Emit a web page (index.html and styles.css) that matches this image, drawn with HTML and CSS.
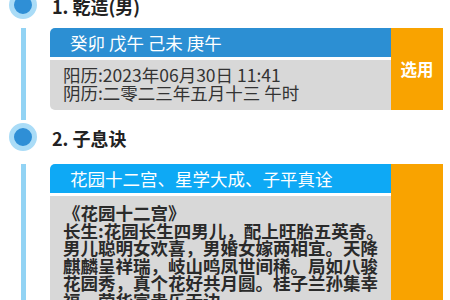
FILE: index.html
```html
<!DOCTYPE html>
<html lang="zh-CN">
<head>
<meta charset="utf-8">
<title>八字</title>
<link rel="stylesheet" href="styles.css">
</head>
<body>
<div class="timeline">
  <section class="item">
    <div class="dot"></div>
    <h2 class="title">1. 乾造(男)</h2>
    <div class="rail"></div>
    <div class="card">
      <div class="card-main">
        <div class="band band--dark">癸卯 戊午 己未 庚午</div>
        <div class="body">阳历:2023年06月30日 11:41<br>阴历:二零二三年五月十三 午时</div>
      </div>
      <button class="pick">选用</button>
    </div>
  </section>
  <section class="item item--second">
    <div class="dot"></div>
    <h2 class="title">2. 子息诀</h2>
    <div class="rail"></div>
    <div class="card">
      <div class="card-main">
        <div class="band band--bright">花园十二宫、星学大成、子平真诠</div>
        <div class="body body--verse">《花园十二宫》<br>长生:花园长生四男儿，配上旺胎五英奇。男儿聪明女欢喜，男婚女嫁两相宜。天降麒麟呈祥瑞，岐山鸣凤世间稀。局如八骏花园秀，真个花好共月圆。桂子兰孙集幸福，荣华富贵乐无边。</div>
      </div>
      <button class="pick"></button>
    </div>
  </section>
</div>
</body>
</html>
```

FILE: styles.css
```css
html, body {
  margin: 0;
  padding: 0;
  overflow: hidden;
  background: #ffffff;
}

body {
  font-family: "Noto Sans CJK SC", "Noto Sans", sans-serif;
  color: #222222;
}

.timeline {
  margin-top: -9px;
}

.item {
  display: grid;
  grid-template-columns: 50px 393px;
  grid-template-rows: 28px var(--head-gap, 9px) auto 13px;
}

.item--second {
  --head-gap: 13px;
}

.dot {
  grid-column: 1;
  grid-row: 1;
  width: 18px;
  height: 18px;
  margin-left: 9px;
  border: 5px solid #aadcf7;
  border-radius: 50%;
  background: #2f8fd6;
}

.title {
  grid-column: 2;
  grid-row: 1;
  margin: 0;
  padding: 3px 0 0 2px;
  font-size: 18px;
  font-weight: 700;
  line-height: 25px;
  color: #222222;
}

.rail {
  grid-column: 1;
  grid-row: 3 / 5;
  width: 5px;
  margin-left: 21px;
  margin-bottom: 3px;
  background: #92d3f4;
}

.card {
  grid-column: 2;
  grid-row: 3;
  display: flex;
}

.card-main {
  flex: 1;
  display: flex;
  flex-direction: column;
  gap: 3px;
}

.band {
  height: 29px;
  padding-left: 20px;
  font-size: 17.5px;
  line-height: 29px;
  color: #ffffff;
  border-radius: 5px 0 0 0;
  white-space: nowrap;
}

.band--dark {
  background: #2c8fd3;
}

.band--bright {
  background: #0ea9f5;
}

.body {
  padding: 6px 5px 8px 13px;
  font-size: 17.5px;
  line-height: 18px;
  color: #333333;
  background: #d8d8d8;
  border-radius: 0 0 0 5px;
}

.body--verse {
  padding-top: 8px;
  font-weight: 700;
  line-height: 17.5px;
  color: #2a2a2a;
}

.pick {
  width: 52px;
  padding: 0;
  border: none;
  background: #f9a300;
  color: #ffffff;
  font-family: "Noto Sans CJK SC", sans-serif;
  font-size: 16.5px;
  font-weight: 700;
}
```
